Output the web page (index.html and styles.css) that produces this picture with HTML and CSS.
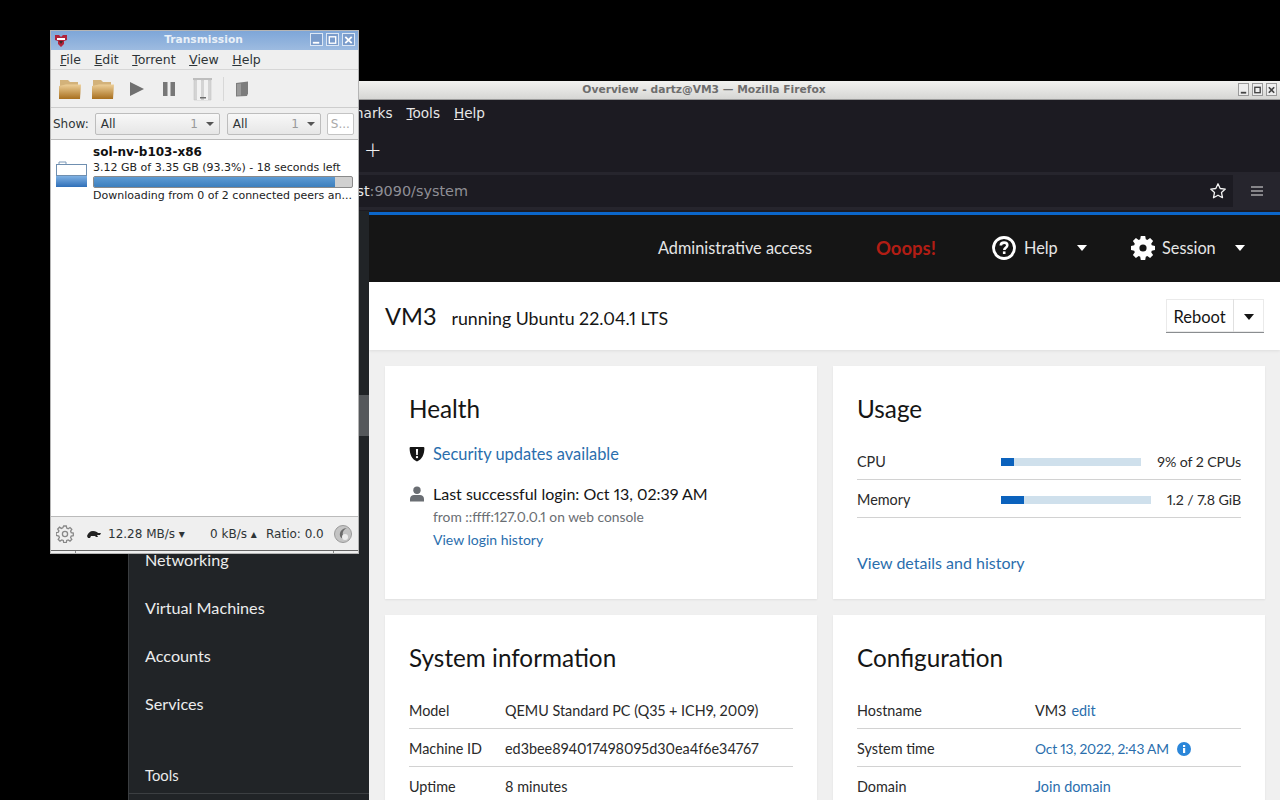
FILE: index.html
```html
<!DOCTYPE html>
<html lang="en">
<head>
<meta charset="utf-8">
<title>Overview - dartz@VM3 — Mozilla Firefox</title>
<link rel="stylesheet" href="styles.css">
</head>
<body>
<div class="desktop">
  <section class="window firefox">
    <header class="ff-title">
      <span class="ff-title-text">Overview - dartz@VM3 — Mozilla Firefox</span>
      <span class="ff-btns">
        <span class="ff-btn"><svg viewBox="0 0 10 10" width="10" height="10"><rect x="2" y="7" width="6" height="2" fill="#444"/></svg></span>
        <span class="ff-btn"><svg viewBox="0 0 10 10" width="10" height="10"><rect x="2" y="2" width="6" height="6" fill="none" stroke="#444" stroke-width="1.5"/></svg></span>
        <span class="ff-btn"><svg viewBox="0 0 10 10" width="10" height="10"><path d="M2 2l6 6M8 2l-6 6" stroke="#444" stroke-width="1.8"/></svg></span>
      </span>
    </header>
    <nav class="ff-menu">
      <span>Bookmarks</span><span><u>T</u>ools</span><span><u>H</u>elp</span>
    </nav>
    <div class="ff-tabs"><span class="ff-plus">+</span></div>
    <div class="ff-url">
      <div class="ff-urlbox">
        <span class="ff-address"><span class="ff-host">localhost</span>:9090/system</span>
        <svg class="ff-star" viewBox="0 0 18 18" width="18" height="18"><path d="M9 1.800l2.200 4.700 5.100.6-3.800 3.500 1 5.100L9 13.200l-4.500 2.500 1-5.100L1.700 7.100l5.100-.6z" fill="none" stroke="#f4f4f4" stroke-width="1.300" stroke-linejoin="round"/></svg>
      </div>
      <svg class="ff-burger" viewBox="0 0 14 12" width="14" height="12"><path d="M1 2h12M1 6h12M1 10h12" stroke="#e6e6e6" stroke-width="1.200"/></svg>
    </div>
    <div class="ff-accent"><span class="ff-accent-side"></span><span class="ff-accent-line"></span></div>
    <div class="cockpit">
      <aside class="sidebar">
        <a class="nav-item">Networking</a>
        <a class="nav-item">Virtual Machines</a>
        <a class="nav-item">Accounts</a>
        <a class="nav-item">Services</a>
        <div class="nav-section">Tools</div>
        <div class="side-thumb"></div>
      </aside>
      <div class="cockpit-main">
        <header class="masthead">
          <span class="mh-admin">Administrative access</span>
          <span class="mh-oops">Ooops!</span>
          <span class="mh-menu mh-help">
            <svg viewBox="0 0 24 24" width="24" height="24"><circle cx="12" cy="12" r="10.500" fill="none" stroke="#fff" stroke-width="2.800"/><path d="M8.800 9.600c0-1.900 1.400-3 3.300-3s3.200 1.100 3.200 2.700c0 2.400-3 2.500-3 4.700" fill="none" stroke="#fff" stroke-width="2.600"/><rect x="10.900" y="15.400" width="2.600" height="2.600" fill="#fff"/></svg>
            <span class="mh-label">Help</span>
            <svg class="mh-caret" viewBox="0 0 10 6" width="10" height="6"><path d="M0 0h10L5 6z" fill="#fff"/></svg>
          </span>
          <span class="mh-menu mh-session">
            <svg viewBox="0 0 24 24" width="24" height="24"><path fill="#fff" fill-rule="evenodd" d="M9.800 0h4.400l.6 3.300 1.500.6 2.800-1.900 3 3-1.900 2.800.6 1.500 3.200.6v4.200l-3.200.6-.6 1.500 1.900 2.800-3 3-2.800-1.900-1.500.6-.6 3.300H9.800l-.6-3.300-1.500-.6-2.800 1.900-3-3 1.900-2.800-.6-1.500-3.200-.6V9.900l3.200-.6.6-1.500L1.900 5l3-3 2.800 1.900 1.500-.6zM12 8.400a3.600 3.600 0 1 0 0 7.200 3.600 3.600 0 0 0 0-7.200z"/></svg>
            <span class="mh-label">Session</span>
            <svg class="mh-caret" viewBox="0 0 10 6" width="10" height="6"><path d="M0 0h10L5 6z" fill="#fff"/></svg>
          </span>
        </header>
        <div class="page-head">
          <h1 class="host">VM3</h1>
          <span class="os">running Ubuntu 22.04.1 LTS</span>
          <span class="reboot"><span class="reboot-label">Reboot</span><span class="reboot-caret"><svg viewBox="0 0 10 6" width="10" height="6"><path d="M0 0h10L5 6z" fill="#151515"/></svg></span></span>
        </div>
        <main class="cards">
          <article class="card">
            <h2 class="card-title">Health</h2>
            <div class="health-row">
              <svg class="health-icon" viewBox="0 0 16 16" width="16" height="16"><path fill="#151515" fill-rule="evenodd" d="M1.500 1h13c.5 0 .9.4.9.900 0 6.500-2.400 11.300-7.400 13.600-5-2.300-7.400-7.100-7.400-13.600 0-.5.400-.9.900-.9zM6.900 3l.3 6h1.600l.3-6zM8 9.900a1.200 1.200 0 1 0 0 2.400 1.200 1.200 0 0 0 0-2.400z"/></svg>
              <a class="link">Security updates available</a>
            </div>
            <div class="health-row login-row">
              <svg class="health-icon" viewBox="0 0 16 16" width="16" height="16"><circle cx="8" cy="4.200" r="3.700" fill="#6a6e73"/><path d="M1 15.500v-2.600C1 10.300 3 9 5 9h6c2 0 4 1.300 4 3.900v2.600z" fill="#6a6e73"/></svg>
              <div class="login-text">
                <div class="login-main">Last successful login: Oct 13, 02:39 AM</div>
                <div class="login-sub">from ::ffff:127.0.0.1 on web console</div>
                <a class="link login-link">View login history</a>
              </div>
            </div>
          </article>
          <article class="card">
            <h2 class="card-title">Usage</h2>
            <div class="usage-row">
              <span class="usage-label">CPU</span>
              <span class="usage-bar"><span class="usage-fill" style="width:9%"></span></span>
              <span class="usage-value">9% of 2 CPUs</span>
            </div>
            <div class="usage-row">
              <span class="usage-label">Memory</span>
              <span class="usage-bar"><span class="usage-fill" style="width:15%"></span></span>
              <span class="usage-value">1.2 / 7.8 GiB</span>
            </div>
            <a class="link usage-link">View details and history</a>
          </article>
          <article class="card">
            <h2 class="card-title">System information</h2>
            <dl class="info info-sys">
              <div class="info-row"><dt>Model</dt><dd>QEMU Standard PC (Q35 + ICH9, 2009)</dd></div>
              <div class="info-row"><dt>Machine ID</dt><dd>ed3bee894017498095d30ea4f6e34767</dd></div>
              <div class="info-row"><dt>Uptime</dt><dd>8 minutes</dd></div>
            </dl>
          </article>
          <article class="card">
            <h2 class="card-title">Configuration</h2>
            <dl class="info info-conf">
              <div class="info-row"><dt>Hostname</dt><dd>VM3 <a class="link edit">edit</a></dd></div>
              <div class="info-row"><dt>System time</dt><dd><a class="link time-link">Oct 13, 2022, 2:43 AM</a>
                <svg class="info-i" viewBox="0 0 14 14" width="14" height="14"><circle cx="7" cy="7" r="7" fill="#2b86d9"/><rect x="6" y="6" width="2.200" height="5" fill="#fff"/><rect x="6" y="3" width="2.200" height="2" fill="#fff"/></svg></dd></div>
              <div class="info-row"><dt>Domain</dt><dd><a class="link">Join domain</a></dd></div>
            </dl>
          </article>
        </main>
      </div>
    </div>
  </section>

  <section class="window transmission">
    <header class="tr-title">
      <svg class="tr-logo" viewBox="0 0 14 14" width="14" height="14"><path d="M1 1h4l2 2 2-2h4v5l-3 1v3l-3 3-3-3V7L1 6z" fill="#b0233a"/><path d="M3 4h8v2H3z" fill="#fff"/><path d="M5 7h4l-2 3z" fill="#3a2a2a"/></svg>
      <span class="tr-title-text">Transmission</span>
      <span class="tr-btns">
        <span class="tr-btn"><svg viewBox="0 0 12 12" width="12" height="12"><rect x="2" y="8" width="7" height="2" fill="#fff"/></svg></span>
        <span class="tr-btn"><svg viewBox="0 0 12 12" width="12" height="12"><rect x="2.500" y="2.500" width="7" height="7" fill="none" stroke="#fff" stroke-width="1.500"/></svg></span>
        <span class="tr-btn"><svg viewBox="0 0 12 12" width="12" height="12"><path d="M2.500 2.500l7 7M9.500 2.500l-7 7" stroke="#fff" stroke-width="2"/></svg></span>
      </span>
    </header>
    <nav class="tr-menu">
      <span><u>F</u>ile</span><span><u>E</u>dit</span><span><u>T</u>orrent</span><span><u>V</u>iew</span><span><u>H</u>elp</span>
    </nav>
    <div class="tr-toolbar">
      <svg class="tool" viewBox="0 0 24 24" width="24" height="24"><use href="#folder"/></svg>
      <svg class="tool" viewBox="0 0 24 24" width="24" height="24"><use href="#folder"/></svg>
      <svg class="tool" viewBox="0 0 24 24" width="24" height="24"><path d="M6 5l14 7-14 7z" fill="#707070"/></svg>
      <svg class="tool" viewBox="0 0 24 24" width="24" height="24"><rect x="6" y="5" width="4.500" height="14" fill="#777"/><rect x="13.500" y="5" width="4.500" height="14" fill="#777"/></svg>
      <svg class="tool" viewBox="0 0 24 24" width="24" height="24"><rect x="3" y="1" width="19" height="2" fill="#bdbdbd"/><path d="M4 3h17v20H4z" fill="#d4d4d4" stroke="#c4c4c4" stroke-width=".6"/><path d="M7 3h4v20H7zM14 3h4v20h-4z" fill="#f2f2f2"/><rect x="10" y="20" width="6" height="1.500" fill="#6e6e6e"/></svg>
      <span class="tool-sep"></span>
      <svg class="tool tool-props" viewBox="0 0 24 24" width="24" height="24"><path d="M6 6l12-1.500v12L17 19l-11 .5z" fill="#7c7c7c"/><path d="M7 7l4-.5v12L7 18.500z" fill="#9a9a9a"/></svg>
      <svg class="svg-defs" width="0" height="0"><defs>
        <linearGradient id="fg" x1="0" y1="0" x2="0" y2="1"><stop offset="0" stop-color="#edcf98"/><stop offset="1" stop-color="#a86f1e"/></linearGradient>
        <symbol id="folder" viewBox="0 0 24 24"><path d="M2 3h8l2 2h8v5H2z" fill="#d3b27a"/><path d="M1 9l7-1.500h15L22 22H1z" fill="url(#fg)"/></symbol>
      </defs></svg>
    </div>
    <div class="tr-filter">
      <span class="tr-show">Show:</span>
      <span class="combo combo-a"><span>All</span><span class="combo-count">1</span><i class="combo-arrow"></i></span>
      <span class="combo combo-b"><span>All</span><span class="combo-count">1</span><i class="combo-arrow"></i></span>
      <span class="tr-search">S...</span>
    </div>
    <div class="tr-list">
      <div class="torrent">
        <svg class="torrent-icon" viewBox="0 0 32 28" width="32" height="28"><defs><linearGradient id="tf" x1="0" y1="0" x2="0" y2="1"><stop offset="0" stop-color="#7fb1e3"/><stop offset="1" stop-color="#2f6fb8"/></linearGradient></defs><path d="M3 1h7v3H3z" fill="#fff" stroke="#7d99b8"/><rect x=".5" y="3.500" width="30" height="11" fill="#fff" stroke="#6f8fb0"/><rect y="15" width="31" height="11" fill="url(#tf)"/></svg>
        <div class="torrent-body">
          <div class="torrent-name">sol-nv-b103-x86</div>
          <div class="torrent-line">3.12 GB of 3.35 GB (93.3%) - 18 seconds left</div>
          <div class="torrent-progress"><span class="torrent-fill" style="width:93.3%"></span></div>
          <div class="torrent-line">Downloading from 0 of 2 connected peers an...</div>
        </div>
      </div>
    </div>
    <footer class="tr-status">
      <svg class="tr-gear" viewBox="0 0 18 18" width="18" height="18"><g fill="none" stroke="#888" stroke-width="1.300"><circle cx="9" cy="9" r="2.600"/><path d="M7.700 1h2.600l.4 2.100 1.500.6 1.800-1.200 1.800 1.800-1.200 1.800.6 1.500 2.100.4v2.600l-2.100.4-.6 1.500 1.200 1.800-1.800 1.800-1.800-1.200-1.500.6-.4 2.100H7.700l-.4-2.100-1.500-.6-1.800 1.200-1.800-1.800 1.200-1.800-.6-1.500L.2 10.300V7.700l2.100-.4.6-1.500-1.200-1.800 1.800-1.800 1.800 1.200 1.500-.6z"/></g></svg>
      <svg class="tr-turtle" viewBox="0 0 14 8" width="14" height="8"><path d="M0 6c1-3 3-5 6-5s4 1 5 2h3l-1 2h-3l1 2H9L8 6H4L3 8H1z" fill="#222"/></svg>
      <span class="tr-down">12.28 MB/s ▾</span>
      <span class="tr-up">0 kB/s ▴</span>
      <span class="tr-ratio">Ratio: 0.0</span>
      <svg class="tr-orb" viewBox="0 0 18 18" width="18" height="18"><circle cx="9" cy="9" r="8.500" fill="#c4c4c4" stroke="#9a9a9a"/><path d="M13 3C9 3 5 6 6 11c1 3 4 3 4 1s-2-2-1-5c.5-2 2-3 4-4z" fill="#6c6c6c"/><circle cx="11" cy="12" r="3" fill="#eee"/></svg>
    </footer>
    <div class="tr-bottom"><span class="tr-grip"></span><span class="tr-grip tr-grip-mid"></span><span class="tr-grip-end"></span></div>
  </section>
</div>
</body>
</html>
```

FILE: styles.css
```css
* { box-sizing: border-box; }
html, body { margin: 0; height: 100%; }
body { background: #000; overflow: hidden; font-family: "Lato", "Liberation Sans", sans-serif; font-variant-numeric: proportional-nums; }
.desktop { position: relative; width: 1280px; height: 800px; overflow: hidden; background: #000; }
.window { position: absolute; display: flex; flex-direction: column; overflow: hidden; }

/* Firefox */
.firefox { left: 128px; top: 81px; width: 1152px; height: 719px; background: #1c1b22; }
.ff-title { flex: 0 0 19px; display: flex; align-items: center; justify-content: center; position: relative; padding-bottom: 2px; background: linear-gradient(#f2f2f0, #d6d6d4); border-bottom: 1px solid #9a9a9a; }
.ff-title-text { font: bold 10.700px "DejaVu Sans", sans-serif; color: #6e6e6e; }
.ff-btns { position: absolute; right: 3px; top: 2px; display: flex; gap: 3px; }
.ff-btn { width: 11px; height: 13px; border: 1px solid #9a9a9a; background: #eee; display: flex; align-items: center; justify-content: center; overflow: hidden; }
.ff-menu { flex: 0 0 27px; display: flex; justify-content: flex-end; padding: 0 795px 2px 0; gap: 14px; align-items: center; background: #1c1b22; font: 13.600px "DejaVu Sans", sans-serif; color: #e8e8e8; white-space: nowrap; }
.ff-tabs { flex: 0 0 45px; display: flex; align-items: center; padding-left: 236px; background: #1c1b22; }
.ff-plus { font: 300 21px "DejaVu Sans", sans-serif; color: #f0f0f0; }
.ff-url { flex: 0 0 38px; display: flex; align-items: center; background: #26252d; }
.ff-urlbox { flex: 1; height: 32px; background: #1c1b22; display: flex; align-items: center; justify-content: space-between; padding: 0 6px 0 0; margin-right: 2px; }
.ff-address { font: 14.400px "DejaVu Sans", sans-serif; color: #8f8f96; margin-left: 177px; white-space: nowrap; }
.ff-host { color: #e8e8e8; }
.ff-burger { margin: 0 16px 0 15px; }
.ff-accent { flex: 0 0 5px; display: flex; background: #1c1b22; }
.ff-accent-side { flex: 0 0 241px; background: #212427; margin-top: 1px; }
.ff-accent-line { flex: 1; border-bottom: 3px solid #0b66c9; }
.cockpit { flex: 1; display: flex; min-height: 0; }

/* Sidebar */
.sidebar { flex: 0 0 241px; position: relative; background: #212427; border-left: 1px solid #3a3d40; padding-top: 320px; color: #f0f0f0; overflow: hidden; }
.nav-item { display: flex; align-items: center; height: 48px; padding-left: 16px; font-size: 16.200px; color: #eceded; }
.nav-section { margin-top: 39px; padding: 0 0 0 16px; height: 28px; border-bottom: 1px solid #3c3f42; font-size: 14.800px; color: #eceded; }
.side-thumb { position: absolute; right: 0; top: 180px; width: 10px; height: 41px; background: #55585b; }

/* Masthead */
.cockpit-main { flex: 1; min-width: 0; display: flex; flex-direction: column; background: #f0f0f0; }
.masthead { flex: 0 0 67px; background: #151515; display: flex; align-items: center; padding: 0 0 2px 289px; color: #e6e6e6; font-size: 16.300px; white-space: nowrap; }
.mh-admin { width: 218px; }
.mh-oops { width: 116px; color: #b21d14; font-size: 18.500px; font-weight: 700; }
.mh-menu { display: flex; align-items: center; }
.mh-help { width: 139px; }
.mh-label { margin-left: 8px; }
.mh-help .mh-caret { margin-left: 19px; }
.mh-session .mh-label { margin-left: 7px; }
.mh-session .mh-caret { margin-left: 19px; }

/* Page head */
.page-head { flex: 0 0 68px; background: #fff; display: flex; align-items: center; padding: 0 16px; box-shadow: 0 1px 3px rgba(0,0,0,.08); }
.host { margin: 0; font-size: 23.600px; font-weight: 400; color: #151515; }
.os { margin-left: 15px; font-size: 17.800px; color: #151515; margin-top: 4px; }
.reboot { margin-left: auto; display: flex; height: 34px; border-bottom: 1px solid #8a8d90; box-shadow: 0 0 0 1px #eaeaea inset; color: #151515; font-size: 16.500px; }
.reboot-label { width: 68px; display: flex; align-items: center; justify-content: center; padding-top: 2px; border-right: 1px solid #e0e0e0; }
.reboot-caret { width: 30px; display: flex; align-items: center; justify-content: center; padding-top: 2px; }

/* Cards */
.cards { display: grid; grid-template-columns: 432px 432px; grid-auto-rows: 233px; gap: 16px; padding: 16px 0 0 16px; }
.card { background: #fff; padding: 24px; box-shadow: 0 1px 2px rgba(0,0,0,.07); color: #151515; font-size: 16.400px; }
.card-title { margin: 0 0 -2px; font-size: 24.300px; line-height: 38px; font-weight: 400; color: #151515; }
.link { color: #2a6ead; text-decoration: none; }
.health-row { display: flex; gap: 8px; margin-top: 16px; line-height: 24px; }
.health-icon { flex: 0 0 16px; margin-top: 4px; }
.login-row { margin-top: 16px; }
.login-main { font-size: 16px; }
.login-sub { font-size: 13.800px; color: #6a6e73; line-height: 22px; }
.login-link { font-size: 14px; line-height: 24px; display: block; }
.usage-row { display: flex; align-items: center; height: 38px; padding-top: 2px; border-bottom: 1px solid #d2d2d2; font-size: 14.400px; }
.card-title + .usage-row { margin-top: 16px; }
.usage-label { flex: 0 0 144px; color: #2a2a2a; }
.usage-bar { flex: 1; height: 8px; background: #cfe0ec; }
.usage-fill { display: block; height: 100%; background: #0b62bd; }
.usage-value { margin-left: 16px; color: #2a2a2a; font-size: 14.200px; letter-spacing: -.1px; }
.usage-link { display: block; margin-top: 33px; line-height: 24px; font-size: 16px; }
.info { margin: 16px 0 0; }
.info-row { display: flex; align-items: center; height: 38px; padding-top: 2px; border-bottom: 1px solid #d2d2d2; font-size: 14.400px; }
.info-row:last-child { border-bottom: 0; padding-top: 0; }
.info dt { color: #2a2a2a; }
.info dd { margin: 0; color: #2a2a2a; display: flex; align-items: center; gap: 8px; }
.info-sys dt { flex: 0 0 96px; }
.info-conf dt { flex: 0 0 178px; }
.edit { margin-left: -3px; }
.time-link { font-size: 13.800px; letter-spacing: -.2px; }
.info-i { margin-left: 0; }

/* Transmission */
.transmission { left: 50px; top: 30px; width: 309px; height: 524px; background: #efefef; border: 1px solid #b5b5b5; font-family: "DejaVu Sans", sans-serif; color: #2e3436; }
.tr-title { flex: 0 0 19px; display: flex; align-items: center; position: relative; background: linear-gradient(#7ea6d8, #9dbbe0); padding-left: 3px; }
.tr-title-text { position: absolute; left: -1px; right: 1px; top: 2px; text-align: center; font-size: 10.700px; font-weight: bold; color: #e9f0f8; }
.tr-btns { position: absolute; right: 3px; top: 2px; display: flex; gap: 3px; }
.tr-btn { width: 13px; height: 13px; background: #7a9ccb; border: 1px solid #dce7f4; display: flex; align-items: center; justify-content: center; overflow: hidden; }
.tr-menu { flex: 0 0 20px; display: flex; gap: 13.500px; align-items: center; padding-left: 9px; font-size: 12.500px; border-bottom: 1px solid #d6d6d6; }
.tr-toolbar { flex: 0 0 38px; display: flex; align-items: center; padding-left: 7px; gap: 9px; border-bottom: 1px solid #cdcdcd; }
.tool { flex: none; }
.tool-sep { width: 1px; height: 24px; background: #d8d8d8; }
.tool-props { margin-left: -3px; }
.svg-defs { position: absolute; }
.tr-filter { flex: 0 0 31px; display: flex; align-items: center; padding: 1px 0 0 2px; font-size: 12px; }
.tr-show { margin-right: 6px; }
.combo { height: 22px; border: 1px solid #bdbdbd; border-radius: 2px; background: linear-gradient(#f8f8f8, #e6e6e6); display: flex; align-items: center; padding-left: 5px; }
.combo-a { width: 125px; }
.combo-b { width: 94px; margin-left: 7px; }
.combo-count { margin-left: auto; color: #9a9a9a; }
.combo-arrow { width: 0; height: 0; border-left: 4px solid transparent; border-right: 4px solid transparent; border-top: 4px solid #555; margin: 0 5px 0 8px; }
.tr-search { width: 27px; height: 22px; margin-left: 6px; background: #fff; border: 1px solid #c4c4c4; border-radius: 2px; color: #aaa; display: flex; align-items: center; padding-left: 3px; overflow: hidden; }
.tr-list { flex: 1; background: #fff; border-top: 1px solid #bbb; border-bottom: 1px solid #bbb; }
.torrent { display: flex; padding: 5px 0 0 5px; }
.torrent-icon { flex: none; margin: 16px 5px 0 0; }
.torrent-body { flex: none; width: 260px; }
.torrent-name { font-size: 12px; font-weight: bold; line-height: 15px; color: #111; margin-bottom: 1px; }
.torrent-line { font-size: 11px; line-height: 14px; white-space: nowrap; color: #222; }
.torrent-progress { height: 12px; margin: 1px 0; background: #d0d0d0; border: 1px solid #8a8a8a; border-radius: 2px; overflow: hidden; }
.torrent-fill { display: block; height: 100%; background: linear-gradient(#5d9bd4, #3d7fbd); }
.tr-status { flex: 0 0 33px; display: flex; align-items: center; padding: 1px 0 0 5px; font-size: 12px; }
.tr-gear { flex: none; }
.tr-turtle { flex: none; margin-left: 13px; }
.tr-down { margin-left: 7px; width: 102px; }
.tr-up { width: 56px; }
.tr-orb { margin-left: 10px; }
.tr-bottom { flex: 0 0 3px; display: flex; border-top: 1px solid #666; background: #efefef; }
.tr-grip { width: 25px; border-right: 1px solid #8a8a8a; }
.tr-grip-mid { width: 258px; }
.tr-grip-end { flex: 1; }
```
